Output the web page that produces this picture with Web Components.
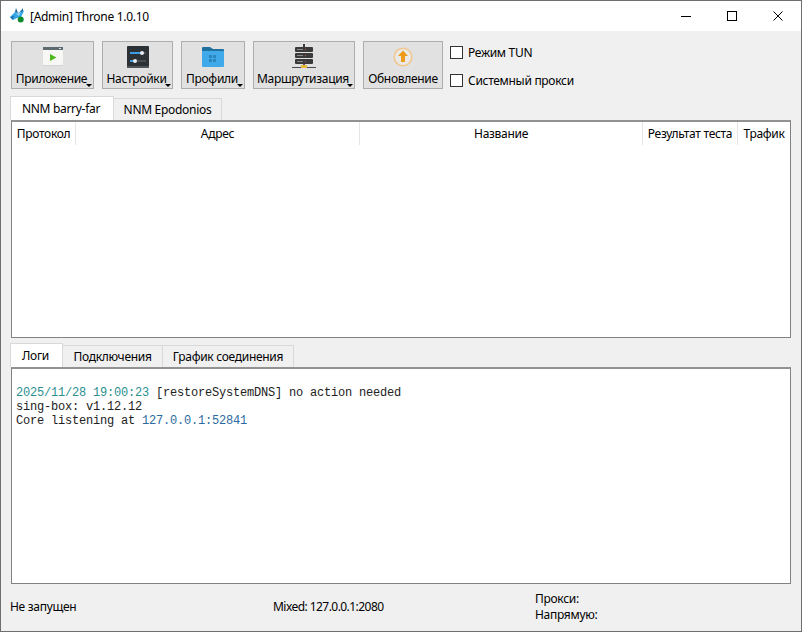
<!DOCTYPE html>
<html lang="ru">
<head>
<meta charset="utf-8">
<title>Throne</title>
<style>
  html, body { margin: 0; padding: 0; }
  body { width: 802px; height: 632px; overflow: hidden; font-family: "Noto Sans", "Liberation Sans", sans-serif; font-size: 12px; letter-spacing: -0.3px; color: #000; }
</style>
</head>
<body>
<app-window>
  <title-bar slot="title" text="[Admin] Throne 1.0.10"></title-bar>

  <tool-bar slot="tools">
    <tool-button style="width:83px" label="Приложение" menu>
      <svg width="20" height="19" viewBox="0 0 20 19">
        <rect width="20" height="19" fill="#f7f8f5"/>
        <rect width="20" height="3" fill="#5d6b70"/>
        <rect x="16" y="1" width="2" height="1" fill="#dfe5e6"/>
        <path d="M7 7 13.5 10.5 7 14Z" fill="#4cb81e"/>
        <rect y="18" width="20" height="1" fill="#d4d6d2"/>
      </svg>
    </tool-button>
    <tool-button style="width:71px" label="Настройки" menu>
      <svg width="22" height="22" viewBox="0 0 22 22">
        <rect width="22" height="22" rx="1" fill="#2c3136"/>
        <rect y="20" width="22" height="2" fill="#50555a"/>
        <rect x="3" y="6" width="16" height="2" fill="#4a4f54"/>
        <rect x="3" y="6" width="12" height="2" fill="#3d9be0"/>
        <circle cx="15" cy="7" r="2" fill="#e8eef2"/>
        <rect x="3" y="14" width="16" height="2" fill="#4a4f54"/>
        <rect x="3" y="14" width="5" height="2" fill="#3d9be0"/>
        <circle cx="8" cy="15" r="2" fill="#e8eef2"/>
      </svg>
    </tool-button>
    <tool-button style="width:64px" label="Профили" menu>
      <svg width="22" height="20" viewBox="0 0 22 20">
        <path d="M0 1Q0 0 1 0H8L11 2H21Q22 2 22 3V6H0Z" fill="#1f6f9f"/>
        <path d="M0 4H22V19Q22 20 21 20H1Q0 20 0 19Z" fill="#3fa9ea"/>
        <g fill="#2b86bd">
          <rect x="7" y="8" width="3" height="3"/><rect x="11" y="8" width="3" height="3"/>
          <rect x="7" y="12" width="3" height="3"/><rect x="11" y="12" width="3" height="3"/>
        </g>
      </svg>
    </tool-button>
    <tool-button style="width:102px" label="Маршрутизация" menu>
      <svg width="24" height="25" viewBox="0 0 24 25">
        <rect x="11" y="0" width="2" height="3" fill="#3b3b3b"/>
        <g fill="#3a3a3a">
          <rect x="3" y="3" width="18" height="5" rx="1"/>
          <rect x="3" y="9" width="18" height="5" rx="1"/>
          <rect x="3" y="15" width="18" height="5" rx="1"/>
        </g>
        <g fill="#8a8a8a">
          <rect x="5" y="5" width="6" height="1"/><rect x="5" y="11" width="6" height="1"/><rect x="5" y="17" width="6" height="1"/>
        </g>
        <g fill="#b5534a">
          <rect x="13" y="5" width="1" height="1"/><rect x="13" y="11" width="1" height="1"/><rect x="13" y="17" width="1" height="1"/>
        </g>
        <rect x="11" y="20" width="2" height="2" fill="#555"/>
        <rect x="0" y="23" width="24" height="1" fill="#4a4a4a"/>
        <rect x="9" y="21" width="6" height="3" fill="#e8b93a"/>
      </svg>
    </tool-button>
    <tool-button style="width:80px" label="Обновление">
      <svg width="20" height="20" viewBox="0 0 20 20">
        <circle cx="10" cy="10" r="9.5" fill="#f2c58a"/>
        <circle cx="10" cy="10" r="8" fill="#e9e9e6"/>
        <path d="M10 3.5 15 9H12V15H8V9H5Z" fill="#f09a1c"/>
      </svg>
    </tool-button>
    <check-stack>
      <check-box>Режим TUN</check-box>
      <check-box>Системный прокси</check-box>
    </check-stack>
  </tool-bar>

  <tab-pane slot="upper" height="218">
    <tab-item slot="tabs" style="width:104px" selected>NNM barry-far</tab-item>
    <tab-item slot="tabs" style="width:108px">NNM Epodonios</tab-item>
    <proxy-table></proxy-table>
  </tab-pane>

  <tab-pane slot="lower" height="217">
    <tab-item slot="tabs" style="width:53px" selected>Логи</tab-item>
    <tab-item slot="tabs" style="width:100px">Подключения</tab-item>
    <tab-item slot="tabs" style="width:131px">График соединения</tab-item>
    <log-view>
      <log-line></log-line>
      <log-line><span style="color:#2b8f8f">2025/11/28 19:00:23</span> [restoreSystemDNS] no action needed</log-line>
      <log-line>sing-box: v1.12.12</log-line>
      <log-line>Core listening at <span style="color:#2b6a9e">127.0.0.1:52841</span></log-line>
    </log-view>
  </tab-pane>

  <status-bar slot="status" state="Не запущен" mixed="Mixed: 127.0.0.1:2080" proxy="Прокси:" direct="Напрямую:"></status-bar>
</app-window>

<script>
  // small helper, every element just sets its own shadow html
  class Base extends HTMLElement {
    connectedCallback() {
      if (this.shadowRoot) return;
      this.attachShadow({ mode: 'open' });
      this.shadowRoot.innerHTML = this.html();
    }
  }

  class AppWindow extends Base {
    html() {
      return `
        <style>
          :host {
            display: flex;
            flex-direction: column;
            box-sizing: border-box;
            width: 802px;
            height: 632px;
            border: 1px solid #6e6e6e;
            background: #f0f0f0;
          }
          .content { display: flex; flex-direction: column; gap: 5px; padding: 0 10px 0 9px; }
        </style>
        <slot name="title"></slot>
        <slot name="tools"></slot>
        <div class="content">
          <slot name="upper"></slot>
          <slot name="lower"></slot>
        </div>
        <slot name="status"></slot>
      `;
    }
  }

  class TitleBar extends Base {
    html() {
      return `
        <style>
          :host {
            display: flex;
            align-items: center;
            height: 30px;
            background: #fff;
            padding-left: 9px;
            flex: none;
          }
          svg { flex: none; display: block; }
          .text { margin-left: 5px; flex: 1; font-size: 12px; }
          .ctl { display: flex; width: 138px; height: 30px; }
          .ctl div { width: 46px; display: flex; align-items: center; justify-content: center; }
        </style>
        <svg width="15" height="16" viewBox="0 0 15 16">
          <path d="M0 9 5 4 8 5 12 2 14 3 11 9 7 10 3 12Z" fill="#35a5e5"/>
          <path d="M5 4 6 0 8 5Z M10 4 13 0 13 3Z" fill="#1f5f95"/>
          <path d="M0 9 4 8 3 12Z" fill="#1f6fae"/>
          <path d="M6 6 11 4 9 8Z" fill="#8ed2f2"/>
          <circle cx="10.7" cy="11.5" r="3" fill="#0f8a2c"/>
        </svg>
        <div class="text">${this.getAttribute('text')}</div>
        <div class="ctl">
          <div><svg width="10" height="10" viewBox="0 0 10 10"><rect y="5" width="10" height="1" fill="#000"/></svg></div>
          <div><svg width="10" height="10" viewBox="0 0 10 10"><rect x=".5" y=".5" width="9" height="9" fill="none" stroke="#000"/></svg></div>
          <div><svg width="10" height="10" viewBox="0 0 10 10"><path d="M.5.5 9.5 9.5M9.5.5.5 9.5" stroke="#000" fill="none"/></svg></div>
        </div>
      `;
    }
  }

  class ToolBar extends Base {
    html() {
      return `
        <style>
          :host { display: flex; gap: 8px; padding: 10px 0 7px 10px; flex: none; height: 48px; }
        </style>
        <slot></slot>
      `;
    }
  }

  class ToolButton extends Base {
    html() {
      const arrow = this.hasAttribute('menu') ? '<span class="arrow"></span>' : '';
      return `
        <style>
          :host {
            display: flex;
            position: relative;
            flex-direction: column;
            align-items: center;
            box-sizing: border-box;
            height: 48px;
            background: #e1e1e1;
            border: 1px solid #adadad;
            font-size: 12px;
          }
          :host([menu]) .label { padding-right: 2px; }
          .icon { height: 29px; display: flex; align-items: center; justify-content: center; }
          .icon ::slotted(svg) { display: block; }
          .label { line-height: 16px; white-space: nowrap; }
          .arrow {
            position: absolute;
            right: 1px;
            bottom: 1px;
            width: 0;
            height: 0;
            border: 3px solid transparent;
            border-top-color: #000;
            border-bottom-width: 0;
          }
        </style>
        <div class="icon"><slot></slot></div>
        <div class="label">${this.getAttribute('label')}</div>
        ${arrow}
      `;
    }
  }

  class CheckStack extends Base {
    html() {
      return `
        <style>
          :host { display: flex; flex-direction: column; gap: 14px; padding-top: 4px; margin-left: -1px; }
        </style>
        <slot></slot>
      `;
    }
  }

  class CheckBox extends Base {
    html() {
      return `
        <style>
          :host { display: flex; align-items: center; height: 14px; font-size: 12px; white-space: nowrap; }
          .box { box-sizing: border-box; width: 13px; height: 13px; background: #fff; border: 1px solid #333; margin-right: 5px; flex: none; }
        </style>
        <span class="box"></span><slot></slot>
      `;
    }
  }

  class TabPane extends Base {
    html() {
      return `
        <style>
          :host { display: block; flex: none; }
          .tabs { display: flex; height: 24px; }
          .page {
            box-sizing: border-box;
            height: ${this.getAttribute('height')}px;
            margin-left: 1px;
            background: #fff;
            border: 1px solid #828282;
            border-top: 2px solid #929292;
          }
        </style>
        <div class="tabs"><slot name="tabs"></slot></div>
        <div class="page"><slot></slot></div>
      `;
    }
  }

  class TabItem extends Base {
    html() {
      return `
        <style>
          :host {
            display: flex;
            align-items: center;
            justify-content: center;
            box-sizing: border-box;
            margin-top: 2px;
            background: #f0f0f0;
            border: 1px solid #d9d9d9;
            border-bottom: 0;
            border-left: 0;
            font-size: 12px;
            white-space: nowrap;
          }
          :host([selected]) {
            margin-top: 0;
            padding-right: 2px;
            background: #fff;
            border: 1px solid #d9d9d9;
            border-bottom: 0;
          }
        </style>
        <slot></slot>
      `;
    }
  }

  class ProxyTable extends Base {
    html() {
      const cols = [['Протокол', 64], ['Адрес', 284], ['Название', 283], ['Результат теста', 95], ['Трафик', 52]];
      const cells = cols.map(([t, w]) => `<div class="th" style="width:${w}px">${t}</div>`).join('');
      return `
        <style>
          :host { display: flex; height: 23px; background: #fff; font-size: 12px; }
          .th {
            box-sizing: border-box;
            flex: none;
            display: flex;
            align-items: center;
            justify-content: center;
            height: 23px;
            border-right: 1px solid #e5e5e5;
            white-space: nowrap;
          }
          .th:last-child { border-right: 0; }
        </style>
        ${cells}
      `;
    }
  }

  class LogView extends Base {
    html() {
      return `
        <style>
          :host {
            display: block;
            padding: 3px 4px;
            font-family: "Liberation Mono", monospace;
            font-size: 12px;
            letter-spacing: -0.2px;
            line-height: 14px;
            color: #222;
          }
        </style>
        <slot></slot>
      `;
    }
  }

  class LogLine extends Base {
    html() {
      // no whitespace in here, the host is white-space: pre
      return '<style>:host { display: block; height: 14px; white-space: pre; }</style><slot></slot>';
    }
  }

  class StatusBar extends Base {
    html() {
      const a = (n) => this.getAttribute(n);
      return `
        <style>
          :host { display: grid; grid-template-columns: 263px 262px 1fr; padding: 7px 0 0 9px; font-size: 12px; line-height: 16px; flex: none; }
          .state, .mixed { align-self: center; }
          .mixed { letter-spacing: -0.55px; }
        </style>
        <div class="state">${a('state')}</div>
        <div class="mixed">${a('mixed')}</div>
        <div><div>${a('proxy')}</div><div>${a('direct')}</div></div>
      `;
    }
  }

  customElements.define('app-window', AppWindow);
  customElements.define('title-bar', TitleBar);
  customElements.define('tool-bar', ToolBar);
  customElements.define('tool-button', ToolButton);
  customElements.define('check-stack', CheckStack);
  customElements.define('check-box', CheckBox);
  customElements.define('tab-pane', TabPane);
  customElements.define('tab-item', TabItem);
  customElements.define('proxy-table', ProxyTable);
  customElements.define('log-view', LogView);
  customElements.define('log-line', LogLine);
  customElements.define('status-bar', StatusBar);
</script>
</body>
</html>
